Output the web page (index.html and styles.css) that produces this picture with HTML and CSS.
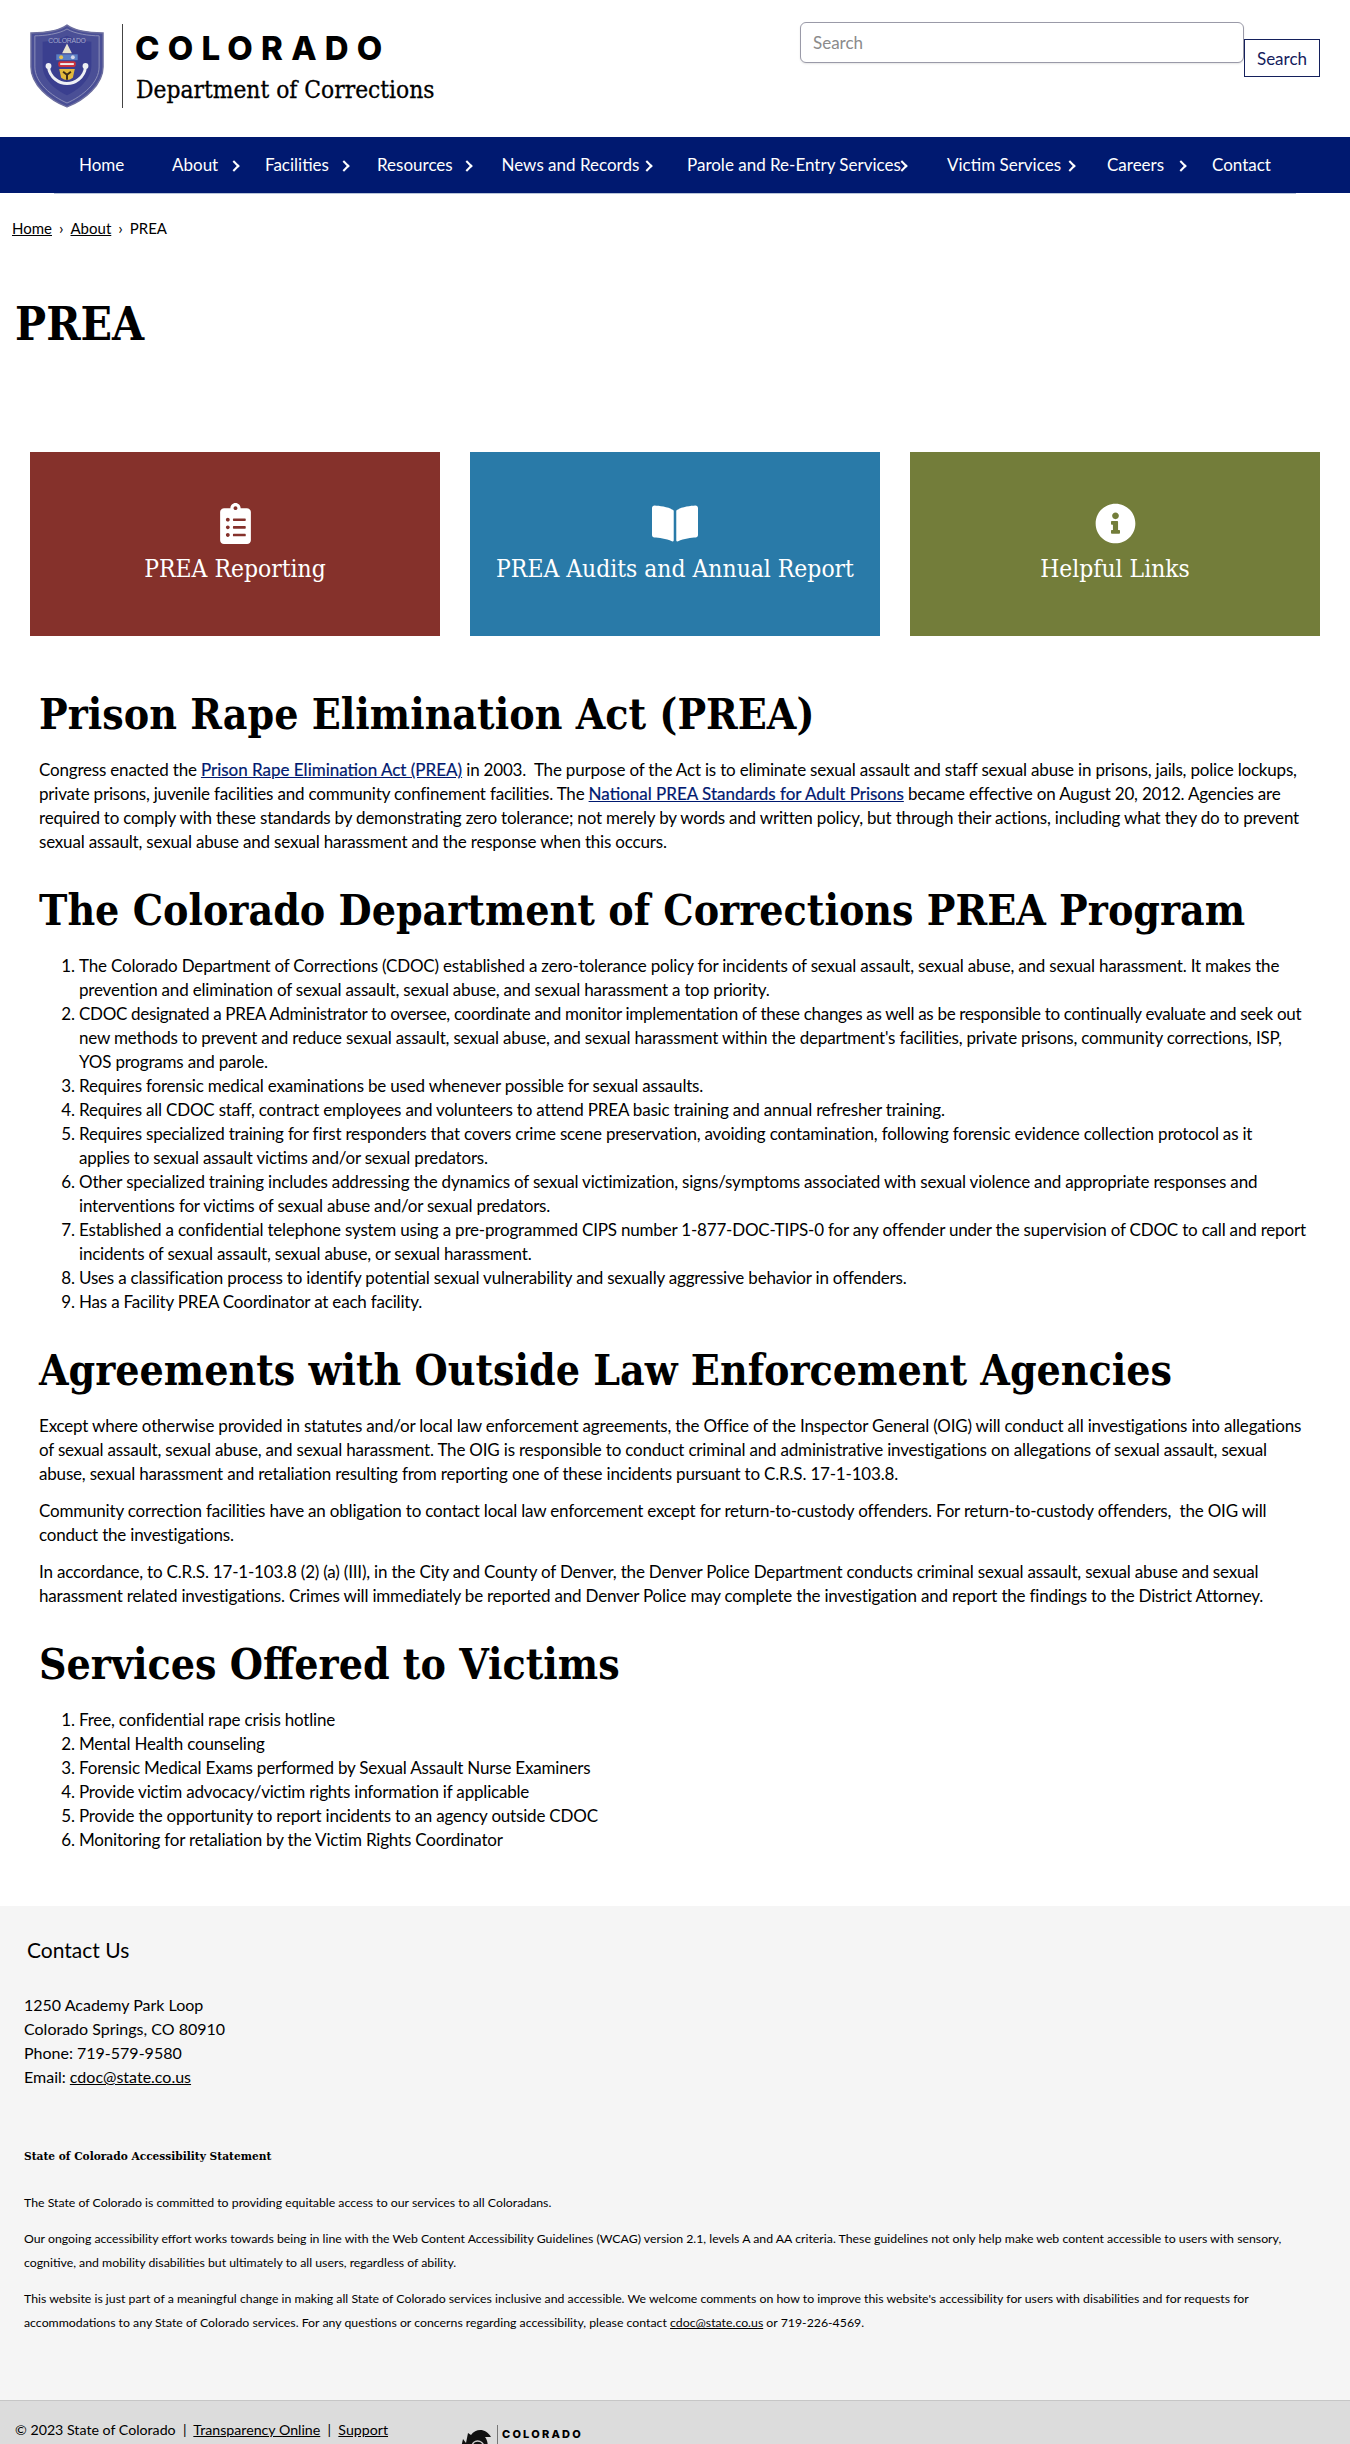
FILE: index.html
```html
<!DOCTYPE html>
<html lang="en">
<head>
<meta charset="utf-8">
<title>PREA | Colorado Department of Corrections</title>
<link rel="stylesheet" href="styles.css">
</head>
<body>
<header class="top">
  <a class="brand" href="#">
    <svg class="crest" viewBox="0 0 76 86" aria-hidden="true">
      <path d="M38 1 C30 7 14 9 1 9 L1 44 C1 62 20 78 38 85 C56 78 75 62 75 44 L75 9 C62 9 46 7 38 1Z" fill="#4a4f96" stroke="#6d6f9f" stroke-width="1.5"/>
      <path d="M38 5 C30 10 15 12 5 12 L5 44 C5 60 22 74 38 81 C54 74 71 60 71 44 L71 12 C61 12 46 10 38 5Z" fill="none" stroke="#8c8fb8" stroke-width="1"/>
      <path d="M38 12 C30 16 20 18 13 18 L13 43 C13 56 26 68 38 73 C50 68 63 56 63 43 L63 18 C56 18 46 16 38 12Z" fill="#3a3f8f"/>
      <text x="38" y="19" class="crest-text" text-anchor="middle">COLORADO</text>
      <path d="M38 20 L43 30 L33 30Z" fill="#e8e4d0"/>
      <rect x="27" y="31" width="22" height="6" fill="#5b7fc4"/>
      <circle cx="32" cy="34" r="2" fill="#e8c24c"/><circle cx="44" cy="34" r="2" fill="#d8d8e8"/>
      <rect x="29" y="38" width="18" height="6" rx="2" fill="#c9313c"/>
      <rect x="31" y="40" width="14" height="2" fill="#eee"/>
      <path d="M30 46 H46 L44 55 Q38 60 32 55Z" fill="#e2b93b"/>
      <path d="M34 49 L38 52 L42 49 M38 52 V57" stroke="#3b2a18" stroke-width="2" fill="none"/>
      <path d="M19 44 C20 55 30 61 38 61 C46 61 56 55 57 44" fill="none" stroke="#eef0f4" stroke-width="3"/>
      <circle cx="19" cy="43" r="3" fill="#eef0f4"/><circle cx="57" cy="43" r="3" fill="#eef0f4"/>
    </svg>
    <span class="brand-rule"></span>
    <span class="brand-text">
      <span class="brand-state">COLORADO</span>
      <span class="brand-dept">Department of Corrections</span>
    </span>
  </a>
  <form class="search">
    <input class="search-input" type="text" placeholder="Search" aria-label="Search">
    <button class="search-btn" type="button">Search</button>
  </form>
</header>

<nav class="nav">
  <ul class="nav-list">
    <li class="w-home"><a href="#">Home</a></li>
    <li class="w-about sub"><a href="#">About</a></li>
    <li class="w-fac sub"><a href="#">Facilities</a></li>
    <li class="w-res sub"><a href="#">Resources</a></li>
    <li class="w-news sub"><a href="#">News and Records</a></li>
    <li class="w-parole sub"><a href="#">Parole and Re-Entry Services</a></li>
    <li class="w-victim sub"><a href="#">Victim Services</a></li>
    <li class="w-careers sub"><a href="#">Careers</a></li>
    <li class="w-contact"><a href="#">Contact</a></li>
  </ul>
</nav>
<div class="nav-shadow"></div>

<ol class="crumbs">
  <li><a href="#">Home</a></li>
  <li><a href="#">About</a></li>
  <li>PREA</li>
</ol>

<h1 class="title">PREA</h1>

<section class="cards">
  <a class="card card-red" href="#">
    <svg class="card-icon" viewBox="0 0 384 512" aria-hidden="true"><path fill="#fff" d="M336 64h-80c0-35.300-28.700-64-64-64s-64 28.700-64 64H48C21.500 64 0 85.500 0 112v352c0 26.500 21.500 48 48 48h288c26.500 0 48-21.500 48-48V112c0-26.500-21.500-48-48-48zM96 424c-13.300 0-24-10.700-24-24s10.700-24 24-24 24 10.700 24 24-10.700 24-24 24zm0-96c-13.300 0-24-10.700-24-24s10.700-24 24-24 24 10.700 24 24-10.700 24-24 24zm0-96c-13.300 0-24-10.700-24-24s10.700-24 24-24 24 10.700 24 24-10.700 24-24 24zm96-192c13.300 0 24 10.700 24 24s-10.700 24-24 24-24-10.700-24-24 10.700-24 24-24zm128 368c0 4.400-3.600 8-8 8H168c-4.400 0-8-3.600-8-8v-16c0-4.400 3.600-8 8-8h144c4.400 0 8 3.600 8 8v16zm0-96c0 4.400-3.600 8-8 8H168c-4.400 0-8-3.600-8-8v-16c0-4.400 3.600-8 8-8h144c4.400 0 8 3.600 8 8v16zm0-96c0 4.400-3.600 8-8 8H168c-4.400 0-8-3.600-8-8v-16c0-4.400 3.600-8 8-8h144c4.400 0 8 3.600 8 8v16z"/></svg>
    <span class="card-label">PREA Reporting</span>
  </a>
  <a class="card card-blue" href="#">
    <svg class="card-icon card-icon-book" viewBox="0 0 576 512" aria-hidden="true"><path fill="#fff" d="M542.220 32.050c-54.800 3.110-163.720 14.430-230.960 55.590-4.640 2.840-7.270 7.890-7.270 13.170v363.870c0 11.550 12.630 18.850 23.280 13.490 69.180-34.820 169.230-44.320 218.700-46.920 16.890-.89 30.020-14.430 30.020-30.660V62.750c.01-17.710-15.350-31.740-33.770-30.700zM264.730 87.640C197.500 46.480 88.580 35.170 33.780 32.050 15.360 31.010 0 45.040 0 62.750V400.600c0 16.240 13.130 29.780 30.020 30.660 49.490 2.600 149.590 12.110 218.770 46.950 10.620 5.350 23.210-1.940 23.210-13.460V100.630c0-5.290-2.620-10.140-7.270-12.990z"/></svg>
    <span class="card-label">PREA Audits and Annual Report</span>
  </a>
  <a class="card card-green" href="#">
    <svg class="card-icon" viewBox="0 0 512 512" aria-hidden="true"><path fill="#fff" d="M256 8C119.043 8 8 119.083 8 256c0 136.997 111.043 248 248 248s248-111.003 248-248C504 119.083 392.957 8 256 8zm0 110c23.196 0 42 18.804 42 42s-18.804 42-42 42-42-18.804-42-42 18.804-42 42-42zm56 254c0 6.627-5.373 12-12 12h-88c-6.627 0-12-5.373-12-12v-24c0-6.627 5.373-12 12-12h12v-64h-12c-6.627 0-12-5.373-12-12v-24c0-6.627 5.373-12 12-12h64c6.627 0 12 5.373 12 12v100h12c6.627 0 12 5.373 12 12v24z"/></svg>
    <span class="card-label">Helpful Links</span>
  </a>
</section>

<main class="content">
  <h2>Prison Rape Elimination Act (PREA)</h2>
  <p>Congress enacted the <a class="link" href="#">Prison Rape Elimination Act (PREA)</a> in 2003.&nbsp; The purpose of the Act is to eliminate sexual assault and staff sexual abuse in prisons, jails, police lockups, private prisons, juvenile facilities and community confinement facilities. The <a class="link" href="#">National PREA Standards for Adult Prisons</a> became effective on August 20, 2012. Agencies are required to comply with these standards by demonstrating zero tolerance; not merely by words and written policy, but through their actions, including what they do to prevent sexual assault, sexual abuse and sexual harassment and the response when this occurs.</p>

  <h2>The Colorado Department of Corrections PREA Program</h2>
  <ol>
    <li>The Colorado Department of Corrections (CDOC) established a zero-tolerance policy for incidents of sexual assault, sexual abuse, and sexual harassment. It makes the prevention and elimination of sexual assault, sexual abuse, and sexual harassment a top priority.</li>
    <li><span class="tight">CDOC designated a PREA Administrator to oversee, coordinate and monitor implementation of these changes as well as be responsible to continually evaluate and seek out</span><br>new methods to prevent and reduce sexual assault, sexual abuse, and sexual harassment within the department's facilities, private prisons, community corrections, ISP, YOS programs and parole.</li>
    <li>Requires forensic medical examinations be used whenever possible for sexual assaults.</li>
    <li>Requires all CDOC staff, contract employees and volunteers to attend PREA basic training and annual refresher training.</li>
    <li>Requires specialized training for first responders that covers crime scene preservation, avoiding contamination, following forensic evidence collection protocol as it<br>applies to sexual assault victims and/or sexual predators.</li>
    <li>Other specialized training includes addressing the dynamics of sexual victimization, signs/symptoms associated with sexual violence and appropriate responses and interventions for victims of sexual abuse and/or sexual predators.</li>
    <li>Established a confidential telephone system using a pre-programmed CIPS number 1-877-DOC-TIPS-0 for any offender under the supervision of CDOC to call and report incidents of sexual assault, sexual abuse, or sexual harassment.</li>
    <li>Uses a classification process to identify potential sexual vulnerability and sexually aggressive behavior in offenders.</li>
    <li>Has a Facility PREA Coordinator at each facility.</li>
  </ol>

  <h2>Agreements with Outside Law Enforcement Agencies</h2>
  <p>Except where otherwise provided in statutes and/or local law enforcement agreements, the Office of the Inspector General (OIG) will conduct all investigations into allegations of sexual assault, sexual abuse, and sexual harassment. The OIG is responsible to conduct criminal and administrative investigations on allegations of sexual assault, sexual abuse, sexual harassment and retaliation resulting from reporting one of these incidents pursuant to C.R.S. 17-1-103.8.</p>
  <p>Community correction facilities have an obligation to contact local law enforcement except for return-to-custody offenders. For return-to-custody offenders,&nbsp; the OIG will conduct the investigations.</p>
  <p>In accordance, to C.R.S. 17-1-103.8 (2) (a) (III), in the City and County of Denver, the Denver Police Department conducts criminal sexual assault, sexual abuse and sexual harassment related investigations. Crimes will immediately be reported and Denver Police may complete the investigation and report the findings to the District Attorney.</p>

  <h2>Services Offered to Victims</h2>
  <ol>
    <li>Free, confidential rape crisis hotline</li>
    <li>Mental Health counseling</li>
    <li>Forensic Medical Exams performed by Sexual Assault Nurse Examiners</li>
    <li>Provide victim advocacy/victim rights information if applicable</li>
    <li>Provide the opportunity to report incidents to an agency outside CDOC</li>
    <li>Monitoring for retaliation by the Victim Rights Coordinator</li>
  </ol>
</main>

<footer class="footer">
  <div class="footer-main">
    <h2 class="contact-title">Contact Us</h2>
    <address class="contact">1250 Academy Park Loop<br>Colorado Springs, CO 80910<br>Phone: 719-579-9580<br>Email: <a href="#">cdoc@state.co.us</a></address>
    <h3 class="a11y-title">State of Colorado Accessibility Statement</h3>
    <p class="a11y">The State of Colorado is committed to providing equitable access to our services to all Coloradans.</p>
    <p class="a11y">Our ongoing accessibility effort works towards being in line with the Web Content Accessibility Guidelines (WCAG) version 2.1, levels A and AA criteria. These guidelines not only help make web content accessible to users with sensory, cognitive, and mobility disabilities but ultimately to all users, regardless of ability.</p>
    <p class="a11y">This website is just part of a meaningful change in making all State of Colorado services inclusive and accessible. We welcome comments on how to improve this website's accessibility for users with disabilities and for requests for accommodations to any State of Colorado services. For any questions or concerns regarding accessibility, please contact <a href="#">cdoc@state.co.us</a> or 719-226-4569.</p>
  </div>
  <div class="footer-bar">
    <p class="legal">© 2023 State of Colorado &nbsp;|&nbsp; <a href="#">Transparency Online</a> &nbsp;|&nbsp; <a href="#">Support</a></p>
    <div class="co-logo">
      <svg class="co-mark" viewBox="0 0 36 36" aria-hidden="true"><path d="M2 36 L7 14 L10 18 L12 8 L15 10 C20 3 30 3 35 12 L29 12 C33 17 32 24 30 36Z" fill="#111"/><path d="M16 36 V22 C16 14 27 14 28 22 V36Z" fill="none" stroke="#ccc" stroke-width="1.500"/><path d="M20 36 V24 C20 20 24 20 25 24 V36Z" fill="none" stroke="#ccc"/></svg>
      <span class="co-rule"></span>
      <span class="co-name">COLORADO</span>
    </div>
  </div>
</footer>
</body>
</html>
```
FILE: styles.css
```css
* { box-sizing: border-box; }
html, body { margin: 0; padding: 0; }
body {
  position: relative;
  height: 2444px;
  overflow: hidden;
  background: #fff;
  color: #000;
  font-family: "Lato", "Liberation Sans", sans-serif;
  font-size: 17px;
  letter-spacing: -0.19px;
  line-height: 24px;
}
a { color: inherit; }

.top { height: 137px; display: flex; justify-content: space-between; align-items: flex-start; }
.brand { display: flex; align-items: flex-start; padding: 24px 0 0 30px; text-decoration: none; color: #000; }
.crest { width: 74px; height: 84px; }
.crest-text { font-family: "Liberation Sans", sans-serif; font-size: 7px; fill: #a5a8cc; }
.brand-rule { width: 1px; height: 84px; background: #444; margin: 0 13px 0 18px; }
.brand-text { display: flex; flex-direction: column; }
.brand-state { font-family: "Inter", sans-serif; font-weight: 800; font-size: 33px; line-height: 40px; letter-spacing: 8.2px; margin: 4px 0 0 -1px; }
.brand-dept { font-family: "DejaVu Serif Condensed", "DejaVu Serif", serif; font-size: 24.3px; line-height: 32px; margin-top: 6px; letter-spacing: 0; -webkit-text-stroke: 0.3px #000; }

.search { display: flex; align-items: flex-start; padding: 22px 30px 0 0; }
.search-input { width: 444px; height: 41px; border: 1px solid #9a9aa8; border-radius: 6px; padding: 0 12px; font: 17px "Lato", sans-serif; color: #333; background: #fff; outline: 0; box-shadow: 0 1px 2px rgba(0,0,0,.1); }
.search-input::placeholder { color: #8b8b8b; opacity: 1; }
.search-btn { width: 76px; height: 38px; margin-top: 17px; border: 1px solid #14205c; background: #fff; color: #14205c; font: 17px "Lato", sans-serif; padding: 0; }

.nav { height: 56px; background: #001970; }
.nav-list { list-style: none; margin: 0; padding: 0 0 0 79px; display: flex; height: 100%; align-items: center; }
.nav-list li { position: relative; font-size: 17px; letter-spacing: 0; color: #fff; white-space: nowrap; flex: none; }
.nav-list a { color: #fff; text-decoration: none; }
.sub::after { content: ""; position: absolute; top: 9px; width: 6px; height: 6px; border-top: 2px solid #fff; border-right: 2px solid #fff; transform: rotate(45deg); }
.w-home { width: 93px; }
.w-about { width: 93px; }
.w-about::after { left: 58px; }
.w-fac { width: 112px; }
.w-fac::after { left: 75px; }
.w-res { width: 124.5px; }
.w-res::after { left: 86px; }
.w-news { width: 185.5px; }
.w-news::after { left: 141px; }
.w-parole { width: 260px; }
.w-parole::after { left: 211px; }
.w-victim { width: 160px; }
.w-victim::after { left: 119px; }
.w-careers { width: 105px; }
.w-careers::after { left: 70px; }
.w-contact { width: 60px; }
.nav-shadow { height: 1px; margin: 0 54px; background: #b8c4d8; }

.crumbs { list-style: none; margin: 22px 0 0; padding: 0 12px; display: flex; font-size: 15px; letter-spacing: 0; line-height: 24px; }
.crumbs li + li::before { content: "›"; margin: 0 7px; font-size: 16px; }

.title { font-family: "DejaVu Serif Condensed", "DejaVu Serif", serif; font-weight: 700; font-size: 46px; letter-spacing: 0; line-height: 56px; margin: 56px 0 0 15px; }

.cards { display: grid; grid-template-columns: repeat(3, 410px); gap: 30px; padding: 0 30px; margin-top: 100px; }
.card { height: 184px; display: flex; flex-direction: column; align-items: center; padding-top: 51px; color: #fff; text-decoration: none; }
.card-red { background: #85312b; }
.card-blue { background: #297aa8; }
.card-green { background: #737d3a; }
.card-icon { height: 41px; width: 41px; }
.card-icon-book { width: 46px; }
.card-label { font-family: "DejaVu Serif Condensed", "DejaVu Serif", serif; font-size: 24.4px; letter-spacing: 0; line-height: 30px; margin-top: 10px; }

.content { padding: 0 39px; margin-top: 52px; }
.content h2 { font-family: "DejaVu Serif Condensed", "DejaVu Serif", serif; font-weight: 700; font-size: 42.4px; letter-spacing: 0; line-height: 52px; margin: 30px 0 18px; }
.content h2:first-child { margin-top: 0; }
.content p { margin: 0 0 13px; }
.content ol { margin: 0 -2px 0 0; padding-left: 40px; }
.tight { letter-spacing: -0.31px; }
.link { color: #001970; letter-spacing: 0; -webkit-text-stroke: 0.2px #001970; }

.footer { position: absolute; left: 0; right: 0; top: 1906px; letter-spacing: 0; }
.footer-main { height: 494px; background: #f5f5f5; padding: 30px 24px 0; }
.contact-title { font-family: "Lato", sans-serif; font-weight: 400; font-size: 21px; line-height: 28px; margin: 0 0 29px 3px; }
.contact { font-style: normal; font-size: 16px; line-height: 24px; }
.a11y-title { font-family: "DejaVu Serif Condensed", "DejaVu Serif", serif; font-size: 11.8px; line-height: 20px; margin: 57px 0 25px; }
.a11y { font-size: 12.3px; line-height: 24px; margin: 0 0 12px; }
.footer-bar { height: 100px; background: #dcdcdc; border-top: 1px solid #c6c6c6; padding: 17px 15px; display: flex; }
.legal { margin: 0; width: 441px; font-size: 14.2px; line-height: 24px; }
.co-logo { display: flex; align-items: flex-start; margin-top: 7px; }
.co-mark { width: 36px; height: 36px; }
.co-rule { width: 1px; height: 36px; background: #777; margin: 0 4px 0 5px; }
.co-name { font-family: "Inter", sans-serif; font-weight: 800; font-size: 11px; line-height: 18px; letter-spacing: 2.2px; }
```
